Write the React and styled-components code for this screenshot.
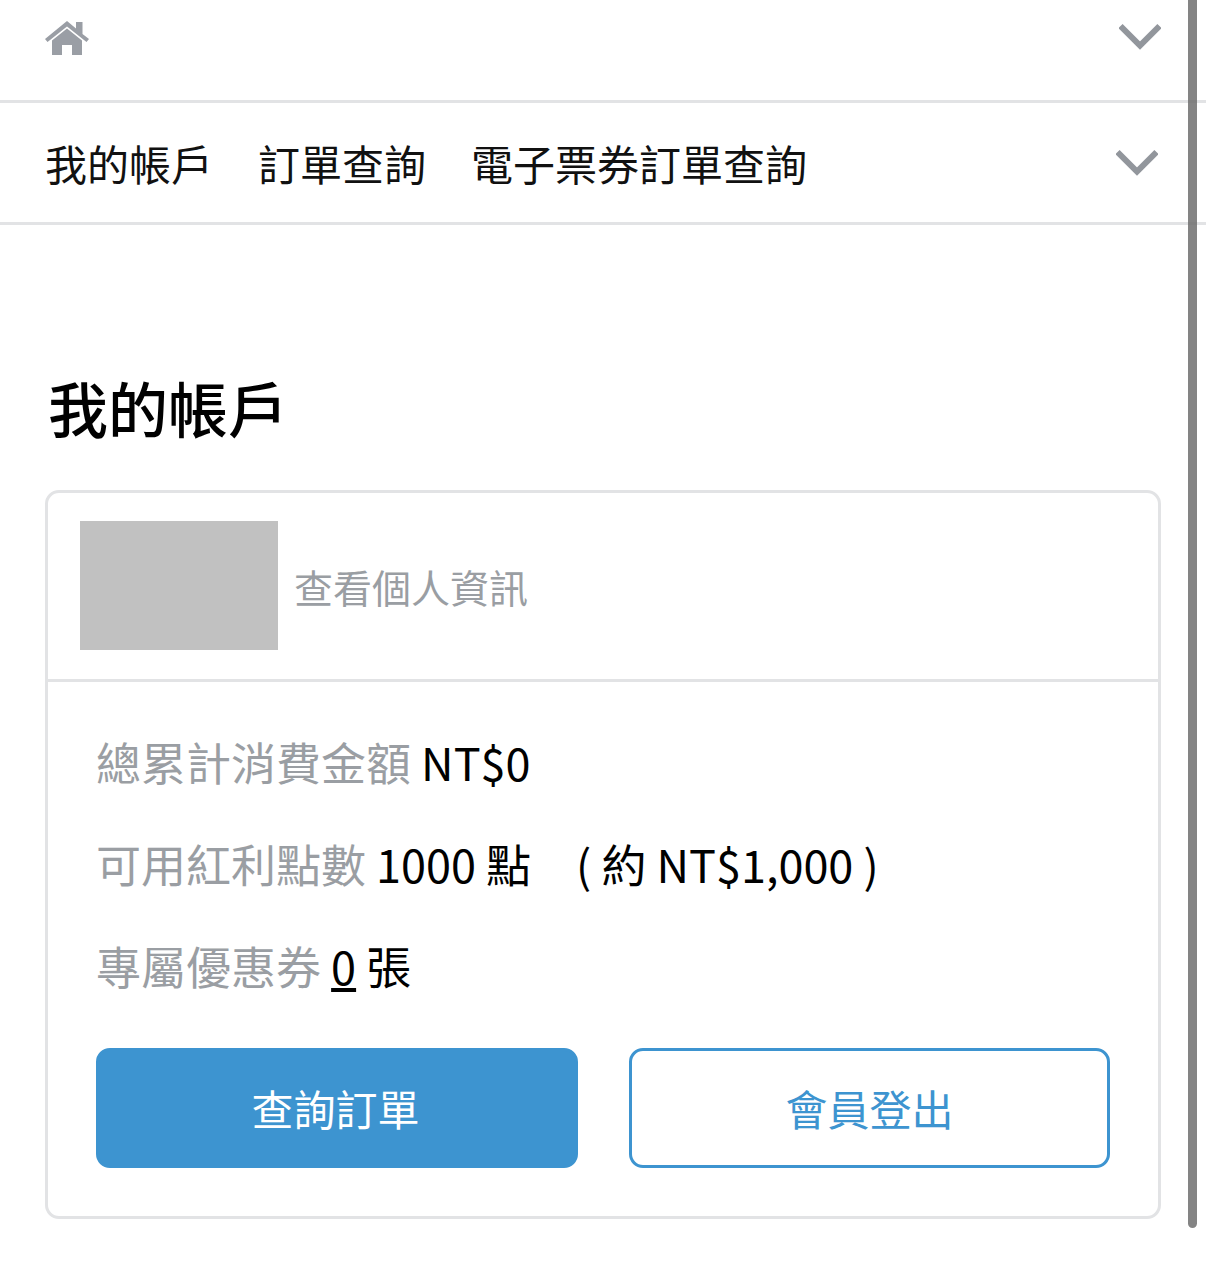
import React from 'react';
import styled, { createGlobalStyle } from 'styled-components';

const GlobalStyle = createGlobalStyle`
  html, body {
    margin: 0;
    padding: 0;
    background: #fff;
  }
  body {
    font-family: "Noto Sans CJK TC", "Noto Sans", sans-serif;
    color: #111;
  }
`;

const Page = styled.div`
  position: relative;
  width: 1206px;
  height: 1271px;
  overflow: hidden;
`;
const Scrollbar = styled.div`
  position: absolute;
  left: 1188px;
  top: 0;
  width: 9px;
  height: 1228px;
  background: rgba(110, 110, 110, 0.85);
  border-radius: 0 0 5px 5px;
`;
const HomeBar = styled.div`
  height: 103px;
  box-sizing: border-box;
  border-bottom: 3px solid #e2e3e5;
  padding: 21px 45px 0 45px;
  display: flex;
  justify-content: space-between;
  align-items: flex-start;
`;
const NavBar = styled.div`
  height: 122px;
  box-sizing: border-box;
  border-bottom: 3px solid #e2e3e5;
  padding: 1px 48px 0 45px;
  display: flex;
  justify-content: space-between;
  align-items: center;
`;
const NavList = styled.nav`
  display: flex;
  gap: 45px;
  line-height: 60px;
  color: #111;
`;
const NavLink = styled.a`
  font-size: 42px;
`;
const Chevron = styled.svg`
  width: 42px;
  height: 28px;
  margin-top: ${({ $top }) => $top}px;
  fill: none;
  stroke: #92969c;
  stroke-width: 6px;
`;
const Main = styled.main`
  padding: 142px 46px 0 45px;
`;
const Title = styled.h1`
  margin: 0 0 43px 3px;
  font-size: 60px;
  line-height: 80px;
  font-weight: 500;
  color: #000;
`;
const Card = styled.section`
  width: 1116px;
  height: 729px;
  box-sizing: border-box;
  border: 3px solid #e2e3e5;
  border-radius: 14px;
`;
const Profile = styled.div`
  height: 189px;
  box-sizing: border-box;
  border-bottom: 3px solid #e2e3e5;
  padding: 28px 0 0 32px;
  display: flex;
  gap: 16px;
`;
const Avatar = styled.div`
  width: 198px;
  height: 129px;
  background: #c1c1c1;
`;
const ProfileLink = styled.a`
  font-size: 39px;
  line-height: 130px;
  color: #9a9ea3;
`;
const Stats = styled.div`
  padding: 47px 48px 0 48px;
`;
const StatRow = styled.div`
  height: 102px;
  line-height: 66px;
  font-size: 45px;
  color: #000;
  white-space: pre;
`;
const StatLabel = styled.span`
  color: #9a9ea3;
`;
const CouponCount = styled.a`
  text-decoration: underline;
`;
const Actions = styled.div`
  display: flex;
  justify-content: space-between;
  margin-top: 13px;
`;
const ActionButton = styled.button`
  width: ${({ $primary }) => ($primary ? 482 : 481)}px;
  height: 120px;
  box-sizing: border-box;
  border-radius: 14px;
  border: 3px solid #3d94d0;
  background: ${({ $primary }) => ($primary ? '#3d94d0' : '#fff')};
  color: ${({ $primary }) => ($primary ? '#fff' : '#3d94d0')};
  font-family: inherit;
  font-size: 42px;
  padding: 0 ${({ $primary }) => ($primary ? 3 : 0)}px 2px 0;
`;

const HomeIcon = () => (
  <svg width="44" height="34" viewBox="0 0 44 34" fill="#9a9ea5">
    <path d="M0 18 22 0 31 7.500V1h6.500V13L44 18 41.500 21 22 5.500 2.500 21Z" />
    <path d="M7 19.500 22 7.500 37 19.500V34H27V24H17V34H7Z" />
  </svg>
);

const App = () => {
  return (
    <Page>
      <GlobalStyle />
      <HomeBar>
        <HomeIcon />
        <Chevron $top={2} viewBox="0 0 42 28">
          <path d="M1.500 3 21 22.500 40.500 3" />
        </Chevron>
      </HomeBar>
      <NavBar>
        <NavList>
          <NavLink>我的帳戶</NavLink>
          <NavLink>訂單查詢</NavLink>
          <NavLink>電子票券訂單查詢</NavLink>
        </NavList>
        <Chevron $top={0} viewBox="0 0 42 28">
          <path d="M1.500 3 21 22.500 40.500 3" />
        </Chevron>
      </NavBar>
      <Main>
        <Title>我的帳戶</Title>
        <Card>
          <Profile>
            <Avatar />
            <ProfileLink>查看個人資訊</ProfileLink>
          </Profile>
          <Stats>
            <StatRow>
              <StatLabel>總累計消費金額</StatLabel> NT$0
            </StatRow>
            <StatRow>
              <StatLabel>可用紅利點數</StatLabel> 1000 點{'　'}( 約 NT$1,000 )
            </StatRow>
            <StatRow>
              <StatLabel>專屬優惠券</StatLabel> <CouponCount>0</CouponCount> 張
            </StatRow>
            <Actions>
              <ActionButton $primary>查詢訂單</ActionButton>
              <ActionButton>會員登出</ActionButton>
            </Actions>
          </Stats>
        </Card>
      </Main>
      <Scrollbar />
    </Page>
  );
};

export default App;
